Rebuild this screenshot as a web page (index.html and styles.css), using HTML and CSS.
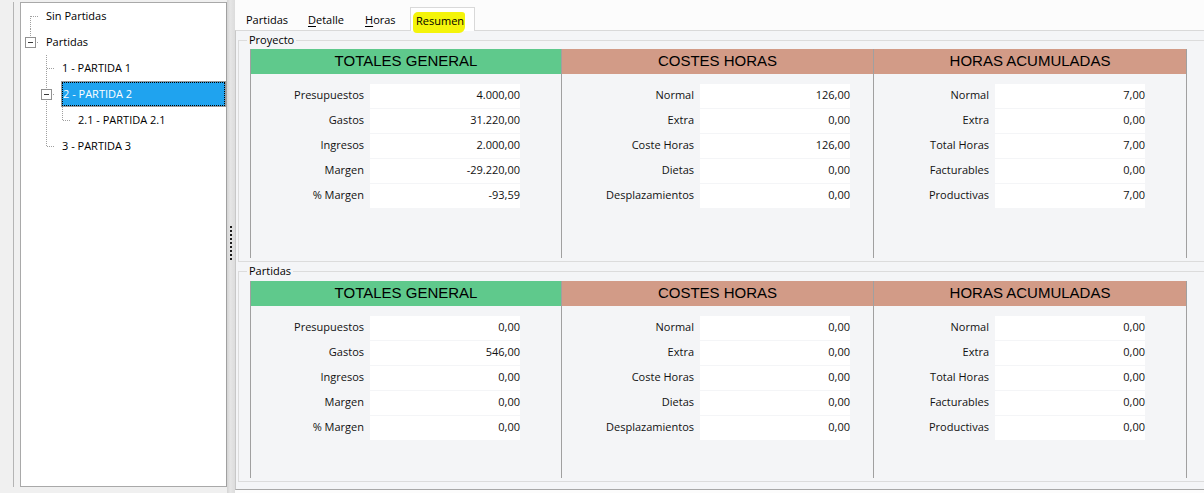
FILE: index.html
```html
<!DOCTYPE html>
<html lang="es">
<head>
<meta charset="utf-8">
<title>Resumen</title>
<link rel="stylesheet" href="styles.css">
</head>
<body>
<div class="window">
  <div class="left-pane">
    <div class="left-edge">
      <div class="tree">
        <div class="node"><span class="cell c-first"></span><span class="label">Sin Partidas</span></div>
        <div class="node"><span class="cell c-ell"><span class="exp"><span class="minus"></span></span></span><span class="label">Partidas</span></div>
        <div class="node"><span class="cell"></span><span class="cell c-tee"></span><span class="label">1 - PARTIDA 1</span></div>
        <div class="node"><span class="cell"></span><span class="cell c-tee"><span class="exp"><span class="minus"></span></span></span><span class="label selected"><span class="focus">2 - PARTIDA 2</span></span></div>
        <div class="node"><span class="cell"></span><span class="cell c-line"></span><span class="cell c-ell"></span><span class="label">2.1 - PARTIDA 2.1</span></div>
        <div class="node"><span class="cell"></span><span class="cell c-ell"></span><span class="label">3 - PARTIDA 3</span></div>
      </div>
    </div>
  </div>
  <div class="splitter"><div class="grip"></div></div>
  <div class="tabs">
    <div class="tab-strip">
      <div class="tab t1">Partidas</div>
      <div class="tab t2"><u>D</u>etalle</div>
      <div class="tab t3"><u>H</u>oras</div>
      <div class="tab t4 active"><span class="marker">Resumen</span></div>
    </div>
    <div class="tab-page">
      <fieldset class="group g1">
        <legend>Proyecto</legend>
        <div class="cols">
          <div class="col c1">
            <div class="head green">TOTALES GENERAL</div>
            <div class="rows">
              <div class="row"><span class="lbl">Presupuestos</span><span class="val">4.000,00</span></div>
              <div class="row"><span class="lbl">Gastos</span><span class="val">31.220,00</span></div>
              <div class="row"><span class="lbl">Ingresos</span><span class="val">2.000,00</span></div>
              <div class="row"><span class="lbl">Margen</span><span class="val">-29.220,00</span></div>
              <div class="row"><span class="lbl">% Margen</span><span class="val">-93,59</span></div>
            </div>
          </div>
          <div class="col c2">
            <div class="head salmon">COSTES HORAS</div>
            <div class="rows">
              <div class="row"><span class="lbl">Normal</span><span class="val">126,00</span></div>
              <div class="row"><span class="lbl">Extra</span><span class="val">0,00</span></div>
              <div class="row"><span class="lbl">Coste Horas</span><span class="val">126,00</span></div>
              <div class="row"><span class="lbl">Dietas</span><span class="val">0,00</span></div>
              <div class="row"><span class="lbl">Desplazamientos</span><span class="val">0,00</span></div>
            </div>
          </div>
          <div class="col c3">
            <div class="head salmon">HORAS ACUMULADAS</div>
            <div class="rows">
              <div class="row"><span class="lbl">Normal</span><span class="val">7,00</span></div>
              <div class="row"><span class="lbl">Extra</span><span class="val">0,00</span></div>
              <div class="row"><span class="lbl">Total Horas</span><span class="val">7,00</span></div>
              <div class="row"><span class="lbl">Facturables</span><span class="val">0,00</span></div>
              <div class="row"><span class="lbl">Productivas</span><span class="val">7,00</span></div>
            </div>
          </div>
        </div>
      </fieldset>
      <fieldset class="group g2">
        <legend>Partidas</legend>
        <div class="cols">
          <div class="col c1">
            <div class="head green">TOTALES GENERAL</div>
            <div class="rows">
              <div class="row"><span class="lbl">Presupuestos</span><span class="val">0,00</span></div>
              <div class="row"><span class="lbl">Gastos</span><span class="val">546,00</span></div>
              <div class="row"><span class="lbl">Ingresos</span><span class="val">0,00</span></div>
              <div class="row"><span class="lbl">Margen</span><span class="val">0,00</span></div>
              <div class="row"><span class="lbl">% Margen</span><span class="val">0,00</span></div>
            </div>
          </div>
          <div class="col c2">
            <div class="head salmon">COSTES HORAS</div>
            <div class="rows">
              <div class="row"><span class="lbl">Normal</span><span class="val">0,00</span></div>
              <div class="row"><span class="lbl">Extra</span><span class="val">0,00</span></div>
              <div class="row"><span class="lbl">Coste Horas</span><span class="val">0,00</span></div>
              <div class="row"><span class="lbl">Dietas</span><span class="val">0,00</span></div>
              <div class="row"><span class="lbl">Desplazamientos</span><span class="val">0,00</span></div>
            </div>
          </div>
          <div class="col c3">
            <div class="head salmon">HORAS ACUMULADAS</div>
            <div class="rows">
              <div class="row"><span class="lbl">Normal</span><span class="val">0,00</span></div>
              <div class="row"><span class="lbl">Extra</span><span class="val">0,00</span></div>
              <div class="row"><span class="lbl">Total Horas</span><span class="val">0,00</span></div>
              <div class="row"><span class="lbl">Facturables</span><span class="val">0,00</span></div>
              <div class="row"><span class="lbl">Productivas</span><span class="val">0,00</span></div>
            </div>
          </div>
        </div>
      </fieldset>
    </div>
  </div>
</div>
</body>
</html>
```
FILE: styles.css
```css
* { box-sizing: border-box; }

body {
  margin: 0;
  width: 1204px;
  height: 493px;
  overflow: hidden;
  background: #f0f0f0;
  font-family: "Open Sans", "Noto Sans", sans-serif;
  font-size: 11px;
  color: #000;
}

.window {
  display: flex;
  height: 493px;
}

/* ---------- left tree ---------- */
.left-pane {
  width: 227px;
  flex: none;
  padding: 2px 0 6px 13px;
  display: flex;
}
.left-edge {
  flex: 1;
  display: flex;
  border-left: 1px solid #b4b4b4;
  padding-left: 6px;
}
.tree {
  flex: 1;
  background: #fff;
  border: 1px solid #a9a9a9;
  border-right-color: #a0a0a0;
}
.node {
  display: flex;
  height: 26px;
  padding-left: 1px;
}
.cell {
  width: 16px;
  flex: none;
  display: flex;
  align-items: center;
  justify-content: center;
  background-repeat: no-repeat;
}
.c-line {
  background-image: repeating-linear-gradient(to bottom, #a0a0a0 0 1px, transparent 1px 2px);
  background-size: 1px 100%;
  background-position: 8px 0;
}
.c-tee {
  background-image:
    repeating-linear-gradient(to bottom, #a0a0a0 0 1px, transparent 1px 2px),
    repeating-linear-gradient(to right, #a0a0a0 0 1px, transparent 1px 2px);
  background-size: 1px 100%, 9px 1px;
  background-position: 8px 0, 9px 13px;
}
.c-ell {
  background-image:
    repeating-linear-gradient(to bottom, #a0a0a0 0 1px, transparent 1px 2px),
    repeating-linear-gradient(to right, #a0a0a0 0 1px, transparent 1px 2px);
  background-size: 1px 13px, 9px 1px;
  background-position: 8px 0, 9px 13px;
}
.c-first {
  background-image:
    repeating-linear-gradient(to bottom, #a0a0a0 0 1px, transparent 1px 2px),
    repeating-linear-gradient(to right, #a0a0a0 0 1px, transparent 1px 2px);
  background-size: 1px 13px, 9px 1px;
  background-position: 8px 13px, 9px 13px;
}
.exp {
  width: 11px;
  height: 11px;
  border: 1px solid #919191;
  background: #fff;
  display: flex;
  align-items: center;
  justify-content: center;
  margin-left: 1px;
}
.minus {
  width: 5px;
  height: 1px;
  background: #3a3a3a;
}
.label {
  margin-left: 6px;
  border: 1px solid transparent;
  padding-left: 1px;
  line-height: 23px;
  white-space: nowrap;
}
.label.selected {
  flex: 1;
  background: #1fa3ef;
  border-color: #9a9a9a;
  color: #fff;
  padding: 0;
  display: flex;
  margin-left: 7px;
}
.focus {
  flex: 1;
  border: 1px dotted #000;
  line-height: 21px;
}

/* ---------- splitter ---------- */
.splitter {
  width: 8px;
  flex: none;
  background: linear-gradient(to right, #d4d4d4, #e6e6e6 40%, #dcdcdc);
  display: flex;
  align-items: center;
  padding-left: 3px;
}
.grip {
  width: 2px;
  height: 36px;
  margin-bottom: 5px;
  background: repeating-linear-gradient(to bottom, #1c1c1c 0 2px, transparent 2px 4px);
}

/* ---------- tabs ---------- */
.tabs {
  flex: 1;
  min-width: 0;
  display: flex;
  flex-direction: column;
  background: #fcfcfc;
  padding-bottom: 3px;
}
.tab-strip {
  height: 30px;
  flex: none;
  display: flex;
  align-items: flex-end;
  padding-left: 5px;
}
.tab {
  height: 23px;
  padding: 6px 0 0 6px;
  line-height: 14px;
  white-space: nowrap;
}
.t1 { width: 62px; }
.t2 { width: 57px; }
.t3 { width: 51px; }
.t4 { width: 65px; }
.tab u { text-decoration-thickness: 1px; text-underline-offset: 2px; }
.tab.active {
  height: 24px;
  margin-bottom: -1px;
  position: relative;
  z-index: 1;
  background: #fff;
  border: 1px solid #d9d9d9;
  border-bottom: none;
  padding-left: 5px;
}
.marker {
  background: #f4f40a;
  border-radius: 5px 3px 6px 4px;
  padding: 1px 1px 5px 3px;
  margin-left: -3px;
}

.tab-page {
  flex: 1;
  background: #f4f5f7;
  border-top: 1px solid #d9d9d9;
  border-left: 1px solid #c8c8c8;
  border-bottom: 1px solid #a8a8a8;
  padding-left: 2px;
  overflow: hidden;
}

/* ---------- group boxes ---------- */
.group {
  margin: 2px 0 0 0;
  border: 1px solid #dcdcdc;
  padding: 2px 0 3px 11px;
  width: calc(100% + 30px);
  min-width: 0;
}
.group.g2 { padding-top: 3px; }
.group legend {
  margin-left: -3px;
  padding: 0 2px;
  line-height: 14px;
  font-size: 11px;
}
.cols {
  display: grid;
  grid-template-columns: 311px 312px 314px;
  height: 209px;
}
.g2 .cols { height: 197px; }
.col {
  border-left: 1px solid #a0a0a0;
}
.col.c3 { border-right: 1px solid #a0a0a0; }
.head {
  height: 25px;
  line-height: 24px;
  text-align: center;
  font-family: "Liberation Sans", Arial, sans-serif;
  font-size: 15px;
  color: #000;
}
.green { background: #5fc98c; }
.salmon { background: #d29b87; }

.rows {
  display: flex;
  flex-direction: column;
  gap: 1px;
  margin-top: 10px;
}
.row {
  display: grid;
  grid-template-columns: var(--lw) 150px;
  column-gap: 6px;
  height: 24px;
  align-items: start;
  line-height: 22px;
}
.c1 { --lw: 113px; }
.c2 { --lw: 132px; }
.c3 { --lw: 115px; }
.lbl {
  text-align: right;
  white-space: nowrap;
  color: #111;
}
.val {
  background: #fff;
  height: 24px;
  line-height: 22px;
  text-align: right;
  color: #111;
}
```
